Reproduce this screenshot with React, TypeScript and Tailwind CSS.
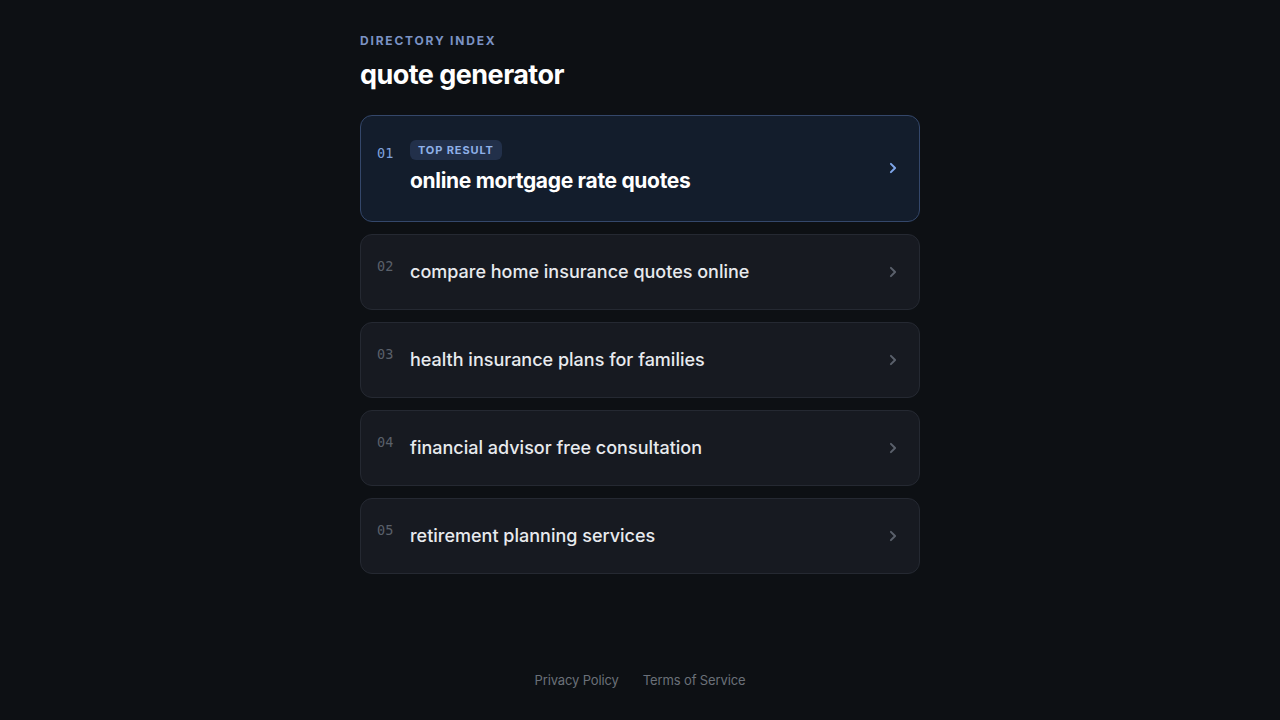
import React from "react";

const items = [
  "compare home insurance quotes online",
  "health insurance plans for families",
  "financial advisor free consultation",
  "retirement planning services",
];

function Chevron({ className }: { className: string }) {
  return (
    <svg width="20" height="20" viewBox="0 0 24 24" fill="none" stroke="currentColor" strokeWidth="2.4" strokeLinecap="round" strokeLinejoin="round" className={className}>
      <path d="m9.5 17 5-5-5-5" />
    </svg>
  );
}

export default function App() {
  return (
    <div className="min-h-screen bg-[#0d1014] flex flex-col items-center" style={{ fontFamily: "Inter, 'Noto Sans', sans-serif" }}>
      <main className="w-[560px] pt-[33px] flex-1">
        <div className="text-[12px] font-bold tracking-[0.15em] text-[#7b93c4] leading-[16px]">DIRECTORY INDEX</div>
        <h1 className="mt-[9px] text-[27px] font-bold text-white leading-[34px] tracking-[-0.02em]">quote generator</h1>
        <div className="mt-[23px] flex flex-col gap-[12px]">
          <div className="flex items-center rounded-xl border border-[#34476a] bg-[#131d2c] pl-4 pr-4 pt-6 pb-[26px]">
            <div className="flex flex-1 items-start gap-4">
              <div className="w-[17px] shrink-0 pt-[7px] text-[13.5px] leading-[12px] text-[#7fa1dc]" style={{ fontFamily: "'DejaVu Sans Mono', monospace" }}>01</div>
              <div className="flex flex-col items-start">
                <span className="rounded-md bg-[#22304a] px-2 py-[3px] text-[11px] font-bold leading-[14px] tracking-[0.08em] text-[#8fb0e8]">TOP RESULT</span>
                <span className="mt-[7px] text-[21px] font-bold leading-[28px] text-white tracking-[-0.015em]">online mortgage rate quotes</span>
              </div>
            </div>
            <Chevron className="text-[#7ea6ea]" />
          </div>
          {items.map((t, i) => (
            <div key={t} className="flex items-center rounded-xl border border-[#252932] bg-[#171a21] pl-4 pr-4 pt-6 pb-[25px]">
              <div className="flex flex-1 items-start gap-4">
                <div className="w-[17px] shrink-0 pt-[1px] text-[13.5px] leading-[12px] text-[#5a606a]" style={{ fontFamily: "'DejaVu Sans Mono', monospace" }}>0{i + 2}</div>
                <span className="text-[18px] font-medium leading-[25px] text-[#e8eaee]">{t}</span>
              </div>
              <Chevron className="text-[#5a606b]" />
            </div>
          ))}
        </div>
      </main>
      <footer className="pb-[32px] flex gap-6 text-[13px] leading-[16px] tracking-[-0.01em] text-[#6b7079]">
        <span>Privacy Policy</span>
        <span>Terms of Service</span>
      </footer>
    </div>
  );
}
